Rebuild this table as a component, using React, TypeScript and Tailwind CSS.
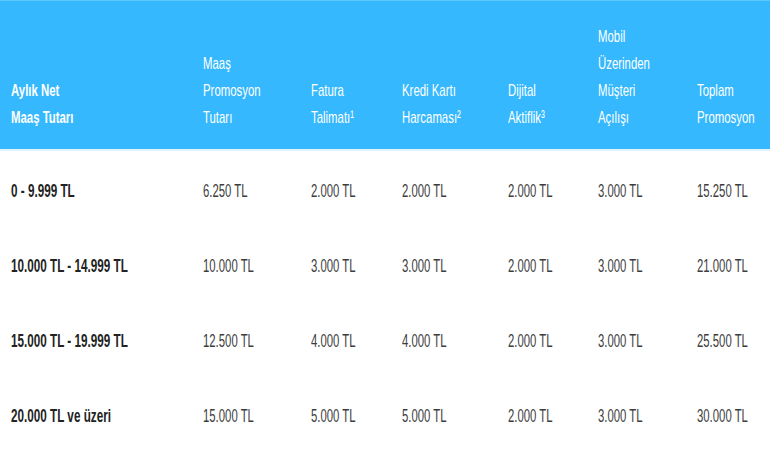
const HEADERS: { lines: string[]; bold?: boolean }[] = [
  { lines: ["Aylık Net", "Maaş Tutarı"], bold: true },
  { lines: ["Maaş", "Promosyon", "Tutarı"] },
  { lines: ["Fatura", "Talimatı¹"] },
  { lines: ["Kredi Kartı", "Harcaması²"] },
  { lines: ["Dijital", "Aktiflik³"] },
  { lines: ["Mobil", "Üzerinden", "Müşteri", "Açılışı"] },
  { lines: ["Toplam", "Promosyon"] },
];

const ROWS = [
  ["0 - 9.999 TL", "6.250 TL", "2.000 TL", "2.000 TL", "2.000 TL", "3.000 TL", "15.250 TL"],
  ["10.000 TL - 14.999 TL", "10.000 TL", "3.000 TL", "3.000 TL", "2.000 TL", "3.000 TL", "21.000 TL"],
  ["15.000 TL - 19.999 TL", "12.500 TL", "4.000 TL", "4.000 TL", "2.000 TL", "3.000 TL", "25.500 TL"],
  ["20.000 TL ve üzeri", "15.000 TL", "5.000 TL", "5.000 TL", "2.000 TL", "3.000 TL", "30.000 TL"],
];

const COLS = "grid grid-cols-[192px_108px_91px_106px_90px_99px_84px]";

export default function App() {
  return (
    <div className="w-[770px] h-[459px] bg-white overflow-hidden font-['Liberation_Sans',Arial,sans-serif]">
      <div className={`${COLS} h-[149px] bg-[#35b8fe] border-t border-[#5ccaff] text-white text-[17px]`}>
        {HEADERS.map((h, i) => (
          <div key={i} className="flex flex-col justify-end pl-[11px] pb-[18px] leading-[27px]">
            {h.lines.map((l) => (
              <span
                key={l}
                className={`inline-block origin-left scale-x-[0.67] whitespace-nowrap ${h.bold ? "font-bold" : "font-normal"}`}
              >
                {l}
              </span>
            ))}
          </div>
        ))}
      </div>
      <div className="h-[2px] bg-[#dff5ff]" />
      <div className="pt-[3px] text-[18px]">
        {ROWS.map((row) => (
          <div key={row[0]} className={`${COLS} h-[75px]`}>
            {row.map((cell, i) => (
              <div key={i} className="flex items-center pl-[11px]">
                {i === 0 ? (
                  <span className="inline-block origin-left scale-x-[0.65] whitespace-nowrap font-bold text-[#222]">
                    {cell}
                  </span>
                ) : (
                  <span className="inline-block origin-left scale-x-[0.63] whitespace-nowrap text-[#3d3d3d]">
                    {cell}
                  </span>
                )}
              </div>
            ))}
          </div>
        ))}
      </div>
    </div>
  );
}
